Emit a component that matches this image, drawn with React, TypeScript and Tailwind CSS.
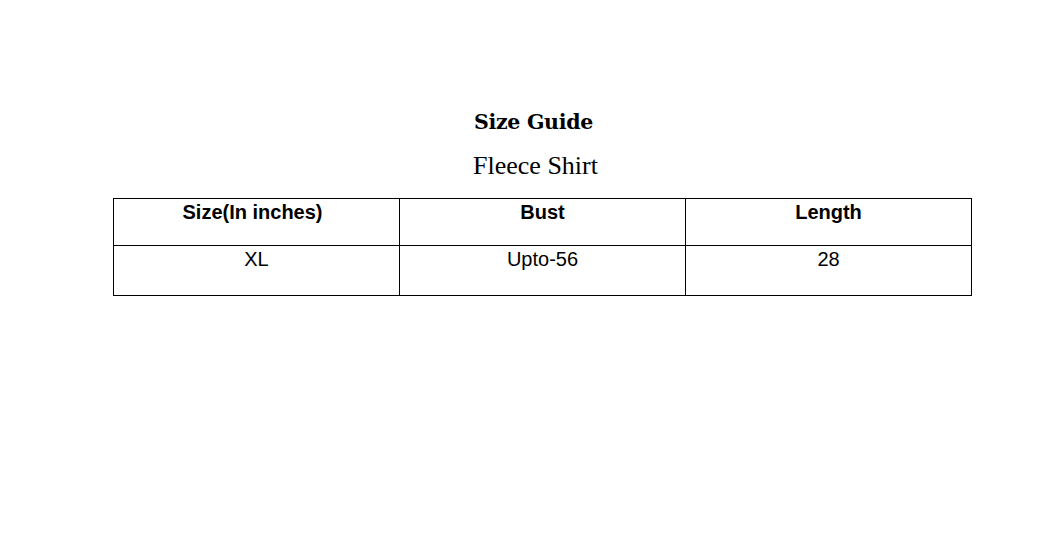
export default function App() {
  const cols = ["Size(In inches)", "Bust", "Length"];
  const row = ["XL", "Upto-56", "28"];
  return (
    <div className="w-[1046px] h-[535px] bg-white pt-[107px] pl-[113px]">
      <div className="w-[859px] flex flex-col items-center">
        <h1 className="mr-[18px] text-[20.5px] leading-[30px] font-bold text-black [font-family:'DejaVu_Serif',serif] tracking-[-0.3px]">
          Size Guide
        </h1>
        <p className="mt-[14px] mr-[14px] text-[26px] leading-[30px] text-black [font-family:'Liberation_Serif',serif]">
          Fleece Shirt
        </p>
      </div>
      <table className="mt-[17px] w-[859px] border-collapse table-fixed [font-family:'Liberation_Sans',Arial,sans-serif] text-[20px] text-black">
        <thead>
          <tr className="h-[47px]">
            {cols.map((c, i) => (
              <th key={c} className={`border border-black align-top font-bold pt-[1px] leading-[24px] ${i === 0 ? "pr-[8px]" : ""}`}>
                {c}
              </th>
            ))}
          </tr>
        </thead>
        <tbody>
          <tr className="h-[50px]">
            {row.map((c) => (
              <td key={c} className="border border-black align-top text-center font-normal pt-[1px] leading-[24px]">
                {c}
              </td>
            ))}
          </tr>
        </tbody>
      </table>
    </div>
  );
}
